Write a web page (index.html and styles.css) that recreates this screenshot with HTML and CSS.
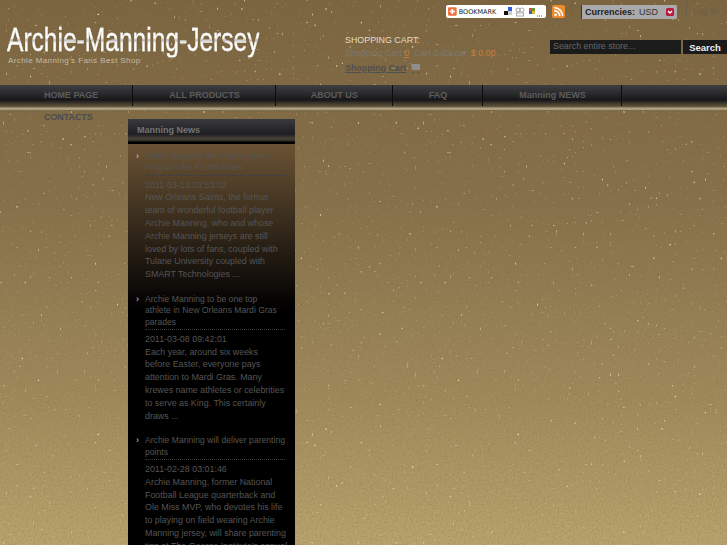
FILE: index.html
```html
<!DOCTYPE html>
<html>
  <head>
    <meta charset="utf-8" />
    <title>Archie-Manning-Jersey</title>
    <link rel="stylesheet" href="styles.css">
  </head>
  <body>
    <div class="page">
      <header class="header">
        <div class="toolbar">
          <div class="bookmark">
            <svg class="bm-plus" width="9" height="9" viewBox="0 0 10 10">
              <rect width="10" height="10" rx="1.5" fill="#f0703c" />
              <path d="M5 2v6M2 5h6" stroke="#fff" stroke-width="2" />
            </svg>
            <span class="bm-label">BOOKMARK</span>
            <svg class="bm-icons" width="40" height="10" viewBox="0 0 40 10">
              <rect x="4" y="0" width="4" height="4" fill="#2f5fd0" />
              <rect x="0" y="4" width="4" height="4" fill="#111" />
              <rect x="4" y="4" width="4" height="4" fill="#ccc" />
              <circle cx="14" cy="3" r="2" fill="none" stroke="#999" />
              <circle cx="18" cy="3" r="2" fill="none" stroke="#aaa" />
              <rect x="12.5" y="6" width="7" height="3" fill="none" stroke="#aaa" />
              <rect x="25" y="1" width="3" height="3" fill="#d8502c" />
              <rect x="28" y="1" width="3" height="3" fill="#5c9a34" />
              <rect x="25" y="4" width="3" height="3" fill="#3a66b8" />
              <rect x="28" y="4" width="3" height="3" fill="#e6b830" />
              <path d="M33 9h1M35 9h1M37 9h1" stroke="#555" />
            </svg>
          </div>
          <svg class="rss" width="13" height="13" viewBox="0 0 13 13">
            <rect width="13" height="13" rx="2" fill="#ee8a2c" />
            <circle cx="3.5" cy="9.8" r="1.4" fill="#fff" />
            <path d="M2.2 5.6a5.4 5.4 0 0 1 5.4 5.4M2.2 2.6a8.4 8.4 0 0 1 8.4 8.4" fill="none" stroke="#fff" stroke-width="1.6" />
          </svg>
          <div class="currency-wrap">
            <div class="currency">
              <b>Currencies:</b>
              <span class="currency-value">USD</span>
              <svg width="8" height="8" viewBox="0 0 8 8">
                <rect width="8" height="8" rx="1.5" fill="#b81c3c" />
                <path d="M2 3l2 2 2-2" fill="none" stroke="#fff" stroke-width="1.4" />
              </svg>
            </div>
          </div>
          <a class="login">Log In</a>
        </div>

        <div class="header-main">
          <div class="brand">
            <div class="logo">Archie-Manning-Jersey</div>
            <div class="slogan">Archie Manning's Fans Best Shop</div>
          </div>
          <div class="cart">
            <div class="cart-title">SHOPPING CART:</div>
            <div class="cart-line">Shopping Cart <em>0</em>&nbsp; Cart Subtotal: <span>$ 0.00</span></div>
            <div class="cart-link">
              <a>Shopping Cart</a>
              <svg width="12" height="12" viewBox="0 0 12 12">
                <path d="M0 1h2l1 7h8V2H3z" fill="#8f8f8a" />
                <circle cx="4" cy="10.5" r="1" fill="#555" />
                <circle cx="9.5" cy="10.5" r="1" fill="#555" />
              </svg>
            </div>
          </div>
          <form class="search">
            <div class="search-input">Search entire store...</div>
            <div class="search-button">Search</div>
          </form>
        </div>
      </header>

      <nav class="nav">
        <a class="nav-first">HOME PAGE</a>
        <a>ALL PRODUCTS</a>
        <a class="nav-about">ABOUT US</a>
        <a>FAQ</a>
        <a>Manning NEWS</a>
      </nav>

      <div class="content">
        <a class="contacts">CONTACTS</a>
        <aside class="news">
          <h3 class="news-head">Manning News</h3>
          <div class="news-body">
            <article class="post">
              <h4>Saints Sponsor the Youth Impact Program the Fourth times</h4>
              <time>2011-03-13 03:53:02</time>
              <p>New Orleans Saints, the former team of wonderful football player Archie Manning, who and whose Archie Manning jerseys are still loved by lots of fans, coupled with Tulane University coupled with SMART Technologies ...</p>
            </article>
            <article class="post">
              <h4>Archie Manning to be one top athlete in New Orleans Mardi Gras parades</h4>
              <time>2011-03-08 09:42:01</time>
              <p>Each year, around six weeks<br />before Easter, everyone pays attention to Mardi Gras. Many krewes name athletes or celebrities to serve as King. This certainly draws ...</p>
            </article>
            <article class="post">
              <h4>Archie Manning will deliver parenting points</h4>
              <time>2011-02-28 03:01:46</time>
              <p>Archie Manning, former National Football League quarterback and Ole Miss MVP, who devotes his life to playing on field wearing Archie Manning jersey, will share parenting tips at The George Institute's annual</p>
            </article>
          </div>
        </aside>
      </div>
    </div>
  </body>
</html>
```

FILE: styles.css
```css
/* Basics */
html,
body {
  margin: 0;
  padding: 0;
  height: 545px;
  overflow: hidden;
}
* {
  box-sizing: border-box;
}
body {
  font-family: "Liberation Sans", Arial, sans-serif;
  font-size: 8.9px;
  color: #555;
}
.page {
  height: 545px;
  overflow: hidden;
  background-color: #8d7749;
  background-image:
    url("data:image/svg+xml,%3Csvg xmlns='http://www.w3.org/2000/svg' width='420' height='420'%3E%3Cfilter id='n'%3E%3CfeTurbulence type='fractalNoise' baseFrequency='0.5' numOctaves='2' seed='4' stitchTiles='stitch'/%3E%3CfeColorMatrix values='0 0 0 0 0.2 0 0 0 0 0.15 0 0 0 0 0.05 0 0 0 0.6 -0.24'/%3E%3C/filter%3E%3Crect width='420' height='420' filter='url(%23n)'/%3E%3C/svg%3E"),
    url("data:image/svg+xml,%3Csvg xmlns='http://www.w3.org/2000/svg' width='420' height='420'%3E%3Cfilter id='s'%3E%3CfeTurbulence type='fractalNoise' baseFrequency='0.37' numOctaves='1' seed='9' stitchTiles='stitch'/%3E%3CfeColorMatrix values='0 0 0 0 0.92 0 0 0 0 0.8 0 0 0 0 0.52 6 0 0 0 -4.2'/%3E%3CfeGaussianBlur stdDeviation='0.7'/%3E%3C/filter%3E%3Crect width='420' height='420' filter='url(%23s)'/%3E%3C/svg%3E"),
    linear-gradient(#7b6440, #86704a 200px, #a08a5c 400px, #b9a36d 545px);
}
a {
  cursor: pointer;
}

/* Header */
.header {
  height: 85px;
}
.toolbar {
  display: flex;
  justify-content: flex-end;
  align-items: flex-start;
  height: 20px;
}
.bookmark {
  display: flex;
  align-items: center;
  width: 100px;
  height: 13px;
  margin-top: 5px;
  padding: 0 2px;
  background: #fff;
  border-radius: 2px;
}
.bm-label {
  width: 47px;
  margin-left: 2px;
  font-family: "DejaVu Sans", sans-serif;
  font-size: 6.5px;
  color: #222;
}
.bm-icons {
  flex: none;
}
.rss {
  margin: 5px 0 0 6px;
}
.currency-wrap {
  height: 18px;
  margin-left: 6px;
  padding-left: 9px;
  border-left: 1px solid #6d6048;
}
.currency {
  display: flex;
  align-items: center;
  width: 96px;
  height: 14px;
  margin-top: 5px;
  padding-left: 3px;
  background: #aaa;
  border-left: 1px solid #333;
  border-radius: 1px;
  font-size: 9px;
  color: #222;
}
.currency-value {
  width: 21px;
  margin: 0 6px 0 4px;
  flex: none;
  color: #333;
}
.login {
  width: 41px;
  height: 18px;
  margin-left: 9px;
  padding: 6px 0 0 6px;
  border-left: 1px solid #6d6048;
  color: #6b5f4a;
}
.header-main {
  display: flex;
  align-items: flex-start;
}
.brand {
  width: 345px;
  padding: 2px 0 0 7px;
}
.logo {
  width: max-content;
  height: 35px;
  font-size: 33.5px;
  line-height: 35px;
  white-space: nowrap;
  transform: scaleX(0.733);
  transform-origin: left;
  background: linear-gradient(#fff 45%, #bbb 52%, #fff 60%);
  -webkit-background-clip: text;
  background-clip: text;
  -webkit-text-stroke: 0.3px #eee;
  color: transparent;
}
.slogan {
  margin: -1px 0 0 1px;
  font-size: 8px;
  letter-spacing: 0.4px;
  color: #c4bba4;
}
.cart {
  width: 205px;
  padding-top: 14px;
}
.cart-title {
  line-height: 13px;
  color: #e4dcc8;
}
.cart-line {
  line-height: 13px;
  color: #7b7870;
}
.cart-line em {
  font-style: normal;
  color: #c97f3a;
  text-decoration: underline;
}
.cart-line span {
  color: #c97f3a;
}
.cart-link {
  display: flex;
  align-items: center;
  gap: 3px;
  margin-top: 2px;
}
.cart-link a {
  font-weight: bold;
  color: #4e4f50;
  text-decoration: underline;
}
.search {
  display: flex;
  gap: 2px;
  margin-top: 20px;
}
.search-input {
  width: 131px;
  height: 14px;
  padding-left: 3px;
  background: #1b1b1b;
  line-height: 13px;
  color: #666;
}
.search-button {
  width: 44px;
  height: 14px;
  background: #1b1b1b;
  font-size: 9.5px;
  line-height: 15px;
  text-align: center;
  font-weight: bold;
  color: #eee;
}

/* Nav */
.nav {
  display: flex;
  height: 25px;
  background: linear-gradient(#3f3f43, #2c2c2f 8px, #17171a 15px, #2e2a25 17px, #5c5039 21px, #6d5f44 22px, #b2a689 23px, #a89c7e 24px);
}
.nav a {
  height: 21px;
  padding: 0 35px 0 36px;
  border-right: 1px solid #0c0c0c;
  line-height: 21px;
  font-size: 9px;
  font-weight: bold;
  color: #5c5c5c;
}
.nav .nav-first {
  padding: 0 34px 0 44px;
}
.nav .nav-about {
  padding: 0 34px 0 35px;
}

/* Content */
.content {
  display: flex;
  align-items: flex-start;
  padding-left: 44px;
}
.contacts {
  width: 84px;
  padding-top: 2px;
  font-weight: bold;
  color: #4a4a50;
}
.news {
  width: 167px;
  margin-top: 9px;
}
.news-head {
  height: 25px;
  margin: 0;
  padding-left: 9px;
  background: linear-gradient(#3a3a3e, #1f1f22 15px, #4a4336 20px, #2a2a28 22px, #000 23px);
  line-height: 22px;
  font-size: 9px;
  color: #747476;
}
.news-body {
  height: 420px;
  padding: 7px 10px 0 17px;
  background: linear-gradient(#6a5334, #0a0806 150px, #000 165px);
}
.post {
  padding-bottom: 13px;
}
.post h4 {
  position: relative;
  margin: 0 0 3px;
  padding-bottom: 1px;
  border-bottom: 1px dotted #3c3c3c;
  font-size: 8.6px;
  font-weight: normal;
  line-height: 11.3px;
}
.post h4::before {
  content: "\203A";
  position: absolute;
  left: -9px;
  top: 0;
  color: #ddd;
}
.post time {
  display: block;
  line-height: 12.8px;
}
.post p {
  margin: 0 -3px 0 0;
  line-height: 12.8px;
}
```
